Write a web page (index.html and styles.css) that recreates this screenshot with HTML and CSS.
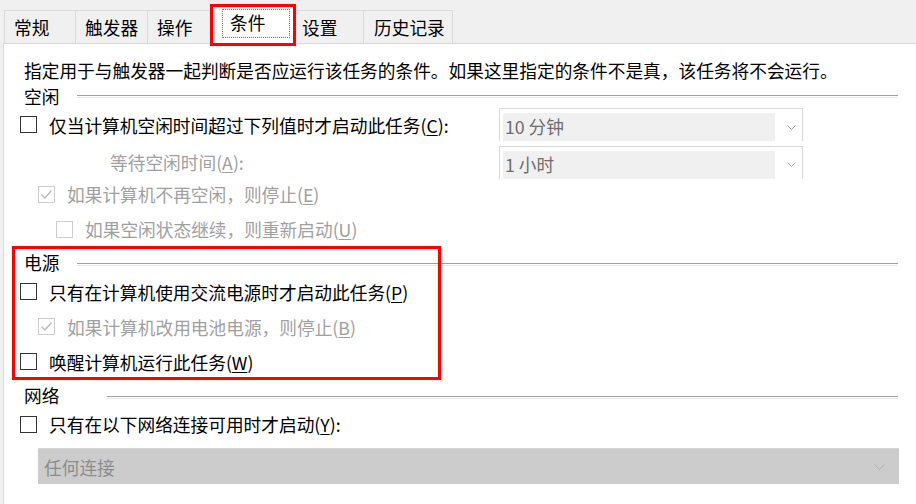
FILE: index.html
```html
<!DOCTYPE html>
<html lang="zh-CN">
<head>
    <meta charset="UTF-8">
    <meta name="viewport" content="width=device-width, initial-scale=1.0">
    <title>条件</title>
    <link rel="stylesheet" href="styles.css">
</head>
<body>
    <div class="window">
        <div class="tabs">
            <div class="tab tab-general">常规</div>
            <div class="tab tab-triggers">触发器</div>
            <div class="tab tab-actions">操作</div>
            <div class="tab tab-conditions active"><span class="focus">条件</span></div>
            <div class="tab tab-settings">设置</div>
            <div class="tab tab-history">历史记录</div>
        </div>

        <div class="panel">
            <div class="row desc">指定用于与触发器一起判断是否应运行该任务的条件。如果这里指定的条件不是真，该任务将不会运行。</div>

            <div class="row group group-idle"><span class="group-title">空闲</span><span class="rule"></span></div>

            <div class="row row-tall">
                <span class="check"></span>
                <span class="label idle-label">仅当计算机空闲时间超过下列值时才启动此任务(<u>C</u>):</span>
                <div class="combo combo-a">
                    <span class="combo-value">10 分钟</span>
                    <svg class="chev" width="9" height="5" viewBox="0 0 9 5"><polyline points="0.5,0.5 4.5,4.5 8.5,0.5" fill="none" stroke="#a8a8a8"/></svg>
                </div>
            </div>

            <div class="row row-wait">
                <span class="label disabled wait">等待空闲时间(<u>A</u>):</span>
                <div class="combo combo-b">
                    <span class="combo-value">1 小时</span>
                    <svg class="chev" width="9" height="5" viewBox="0 0 9 5"><polyline points="0.5,0.5 4.5,4.5 8.5,0.5" fill="none" stroke="#a8a8a8"/></svg>
                </div>
            </div>

            <div class="row row-stop indent-1">
                <span class="check off">
                    <svg width="15" height="15" viewBox="0 0 15 15"><polyline points="2.5,7.5 6,11 12.5,3.5" fill="none" stroke="#b8b8b8" stroke-width="1.3"/></svg>
                </span>
                <span class="label disabled">如果计算机不再空闲，则停止(<u>E</u>)</span>
            </div>

            <div class="row row-restart indent-2">
                <span class="check off"></span>
                <span class="label disabled">如果空闲状态继续，则重新启动(<u>U</u>)</span>
            </div>

            <div class="row group group-power"><span class="group-title">电源</span><span class="rule"></span></div>

            <div class="row row-power">
                <span class="check"></span>
                <span class="label">只有在计算机使用交流电源时才启动此任务(<u>P</u>)</span>
            </div>

            <div class="row row-power indent-1">
                <span class="check off">
                    <svg width="15" height="15" viewBox="0 0 15 15"><polyline points="2.5,7.5 6,11 12.5,3.5" fill="none" stroke="#b8b8b8" stroke-width="1.3"/></svg>
                </span>
                <span class="label disabled">如果计算机改用电池电源，则停止(<u>B</u>)</span>
            </div>

            <div class="row row-power">
                <span class="check"></span>
                <span class="label">唤醒计算机运行此任务(<u>W</u>)</span>
            </div>

            <div class="row group group-net"><span class="group-title">网络</span><span class="rule"></span></div>

            <div class="row row-net">
                <span class="check"></span>
                <span class="label">只有在以下网络连接可用时才启动(<u>Y</u>):</span>
            </div>

            <div class="combo combo-net">
                <span class="combo-value">任何连接</span>
                <svg class="chev" width="11" height="6" viewBox="0 0 11 6"><polyline points="0.5,0.5 5.5,5.5 10.5,0.5" fill="none" stroke="#b0b0b0"/></svg>
            </div>
        </div>

        <!-- red annotation frames -->
        <div class="mark mark-tab"></div>
        <div class="mark mark-power"></div>
    </div>
</body>
</html>
```

FILE: styles.css
```css
body {
    margin: 0;
    background-color: #f0f0f0;
    font-family: "Noto Sans CJK SC", "Microsoft YaHei", sans-serif;
    font-size: 17.7px;
    color: #000;
}
.window {
    position: relative;
    width: 916px;
    height: 504px;
    overflow: hidden;
}

/* tab strip */
.tabs {
    display: flex;
    padding: 10px 0 0 4px;
    height: 33px;
    box-sizing: content-box;
}
.tab {
    height: 33px;
    box-sizing: border-box;
    border: 1px solid #dadada;
    border-bottom: none;
    margin-left: -1px;
    padding-left: 9px;
    line-height: 32px;
    background-color: #f0f0f0;
    white-space: nowrap;
}
.tab-general { width: 72px; margin-left: 0; }
.tab-triggers { width: 73px; }
.tab-actions { width: 68px; }
.tab-settings { width: 70px; padding-left: 7px; }
.tab-history { width: 90px; padding-left: 10px; }
.tab.active {
    position: relative;
    z-index: 1;
    width: 80px;
    height: 38px;
    margin-top: -4px;
    margin-left: 0;
    padding: 2px 0 0 6px;
    background-color: #fff;
    border-color: #fff;
    line-height: normal;
}
.focus {
    display: block;
    width: 68px;
    height: 29px;
    box-sizing: border-box;
    border: 1px dotted #777;
    padding-left: 7px;
    line-height: 25px;
}

/* page */
.panel {
    height: 461px;
    margin-left: 3px;
    border-top: 1px solid #d9d9d9;
    border-left: 1px solid #d9d9d9;
    background-color: #fff;
    padding-top: 13px;
    box-sizing: border-box;
}
.row {
    display: flex;
    align-items: center;
    padding-left: 16px;
    white-space: nowrap;
    line-height: 20px;
}
.desc { height: 26px; padding-left: 20px; }
.group { padding-left: 20px; }
.group-idle { height: 18px; padding-top: 4px; }
.group-power { height: 24px; }
.group-net { height: 32px; }
.rule {
    flex: none;
    height: 1px;
    border-top: 1px solid #a0a0a0;
    border-bottom: 1px solid #e6e6e6;
    margin-top: 4px;
}
.group-idle .rule { margin-top: 0; }
.group-idle .rule, .group-power .rule { width: 821px; margin-left: 18px; }
.group-net .rule { width: 791px; margin-left: 48px; }

.row-tall { height: 39px; }
.row-wait { height: 36px; }
.row-stop { height: 28px; }
.row-restart { height: 42px; }
.row-power { height: 35px; }
.row-net { height: 26px; }
.indent-1 { padding-left: 34px; }
.indent-2 { padding-left: 52px; }

.check {
    flex: none;
    display: flex;
    align-items: center;
    justify-content: center;
    width: 17px;
    height: 17px;
    box-sizing: border-box;
    border: 1px solid #333;
    background-color: #fff;
    margin-right: 12px;
}
.check.off { border-color: #cccccc; }
.label u { text-underline-offset: 2px; }
.disabled { color: #a0a0a0; }
.idle-label { flex: none; width: 450px; }
.wait { flex: none; box-sizing: border-box; padding-left: 90px; width: 479px; }

/* drop-down boxes */
.combo {
    display: flex;
    align-items: center;
    box-sizing: border-box;
}
.combo-a, .combo-b {
    width: 304px;
    height: 33px;
    border: 1px solid #d9d9d9;
    border-bottom: none;
    padding: 4px 0 0 3px;
    align-items: stretch;
}
.combo-a .combo-value, .combo-b .combo-value {
    width: 270px;
    background-color: #f0f0f0;
    color: #6d6d6d;
    padding-left: 2px;
    line-height: 26px;
}
.combo-a .chev, .combo-b .chev {
    align-self: center;
    margin: 0 0 0 12px;
}
.combo-net {
    height: 36px;
    width: 861px;
    margin: 11px 0 0 34px;
    background-color: #cccccc;
    border-top: 1px solid #d6d6d6;
    padding: 0 14px 0 6px;
    justify-content: space-between;
}
.combo-net .combo-value { color: #8c8c8c; }

/* annotation frames drawn over the dialog */
.mark {
    position: absolute;
    border: 3px solid #ff0000;
    box-sizing: border-box;
    z-index: 2;
}
.mark-tab { left: 210px; top: 4px; width: 86px; height: 42px; }
.mark-power { left: 12px; top: 246px; width: 429px; height: 134px; }
```
